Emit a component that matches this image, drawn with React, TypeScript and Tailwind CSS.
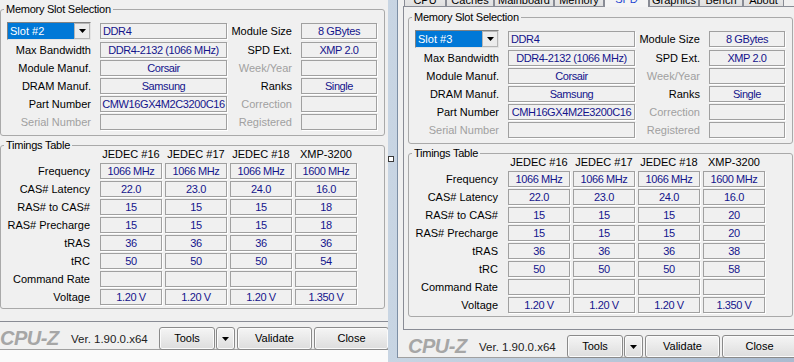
import React from 'react';

type SlotData = {
  slot: string;
  part: string;
  timings: string[][];
};

const TIMING_LABELS = [
  'Frequency',
  'CAS# Latency',
  'RAS# to CAS#',
  'RAS# Precharge',
  'tRAS',
  'tRC',
  'Command Rate',
  'Voltage',
];

const TIMING_HEADERS = ['JEDEC #16', 'JEDEC #17', 'JEDEC #18', 'XMP-3200'];

const SLOT2: SlotData = {
  slot: 'Slot #2',
  part: 'CMW16GX4M2C3200C16',
  timings: [
    ['1066 MHz', '1066 MHz', '1066 MHz', '1600 MHz'],
    ['22.0', '23.0', '24.0', '16.0'],
    ['15', '15', '15', '18'],
    ['15', '15', '15', '18'],
    ['36', '36', '36', '36'],
    ['50', '50', '50', '54'],
    ['', '', '', ''],
    ['1.20 V', '1.20 V', '1.20 V', '1.350 V'],
  ],
};

const SLOT3: SlotData = {
  slot: 'Slot #3',
  part: 'CMH16GX4M2E3200C16',
  timings: [
    ['1066 MHz', '1066 MHz', '1066 MHz', '1600 MHz'],
    ['22.0', '23.0', '24.0', '16.0'],
    ['15', '15', '15', '20'],
    ['15', '15', '15', '20'],
    ['36', '36', '36', '38'],
    ['50', '50', '50', '58'],
    ['', '', '', ''],
    ['1.20 V', '1.20 V', '1.20 V', '1.350 V'],
  ],
};

const TABS = [
  { name: 'CPU', w: 'w-[42px]' },
  { name: 'Caches', w: 'w-[48px]' },
  { name: 'Mainboard', w: 'w-[60px]' },
  { name: 'Memory', w: 'w-[50px]' },
  { name: 'SPD', w: 'w-[45px]', active: true },
  { name: 'Graphics', w: 'w-[50px]' },
  { name: 'Bench', w: 'w-[44px]' },
  { name: 'About', w: 'w-[41px]' },
];

function Field({ value, left }: { value: string; left?: boolean }) {
  return (
    <div
      className={`h-[16px] self-center border border-[#a0a0a0] shadow-[1px_1px_0_#fff] leading-[14px] tracking-[-0.4px] whitespace-nowrap overflow-hidden text-[#14148c] ${
        left ? 'text-left pl-[2px]' : 'text-center'
      }`}
    >
      {value}
    </div>
  );
}

function Label({ text, dim }: { text: string; dim?: boolean }) {
  return (
    <div className={`text-right pr-[9px] leading-[16px] self-center whitespace-nowrap ${dim ? 'text-[#a0a0a0]' : 'text-black'}`}>
      {text}
    </div>
  );
}

function SlotCombo({ slot }: { slot: string }) {
  return (
    <div className="ml-[6px] w-[84px] h-[18px] self-center flex border border-t-[#828282] border-l-[#828282] border-b-[#e3e3e3] border-r-[#e3e3e3] bg-white">
      <div className="flex-1 bg-[#0078d7] text-white leading-[16px] pl-[2px]">{slot}</div>
      <div className="w-[16px] flex items-center justify-center bg-[#ececec] border border-[#b5b5b5]">
        <svg width="7" height="4" viewBox="0 0 7 4">
          <path d="M0 0h7L3.5 4z" fill="#000" />
        </svg>
      </div>
    </div>
  );
}

function Button({ children, w }: { children: React.ReactNode; w: string }) {
  return (
    <div
      className={`${w} h-[23px] flex items-center justify-center border border-[#8a8a8a] rounded-[3px] bg-linear-to-b from-[#f5f5f5] to-[#dddddd] shadow-[inset_0_0_0_1px_#fbfbfb] text-black`}
    >
      {children}
    </div>
  );
}

function CpuzWindow({ data }: { data: SlotData }) {
  return (
    <div className="w-[400px] h-[372px] bg-[#f0f0f0] flex flex-col border-b border-[#a0a0a0]">
      {/* tab strip */}
      <div className="h-[20px] ml-[6px] flex items-end">
        {TABS.map(t =>
          t.active ? (
            <div
              key={t.name}
              className={`${t.w} h-[21px] -mb-px relative z-10 border border-b-0 border-[#898c95] bg-[#f4f4f4] text-[#1e46d2] text-center pt-[5px] leading-[14px]`}
            >
              {t.name}
            </div>
          ) : (
            <div
              key={t.name}
              className={`${t.w} h-[18px] border border-b-0 border-[#898c95] bg-linear-to-b from-[#f2f2f2] to-[#e0e0e0] text-black text-center pt-[4px] leading-[14px]`}
            >
              {t.name}
            </div>
          )
        )}
      </div>

      {/* tab panel */}
      <div className="ml-[5px] w-[394px] border border-[#898c95] pt-[3px] pl-[4px] pr-[3px] pb-[12px]">
        <fieldset className="border border-[#a9a9a9] rounded-[3px] pb-[5px]">
          <legend className="ml-[3px] px-[2px] h-[14px] leading-[14px] tracking-[-0.25px] text-black">Memory Slot Selection</legend>
          <div className="grid grid-cols-[99px_127px_74px_76px] grid-rows-[18px_16px_16px_16px_16px_16px] gap-y-[2px] pt-[6px]">
            <SlotCombo slot={data.slot} />
            <Field value="DDR4" left />
            <Label text="Module Size" />
            <Field value="8 GBytes" />

            <Label text="Max Bandwidth" />
            <Field value="DDR4-2132 (1066 MHz)" />
            <Label text="SPD Ext." />
            <Field value="XMP 2.0" />

            <Label text="Module Manuf." />
            <Field value="Corsair" />
            <Label text="Week/Year" dim />
            <Field value="" />

            <Label text="DRAM Manuf." />
            <Field value="Samsung" />
            <Label text="Ranks" />
            <Field value="Single" />

            <Label text="Part Number" />
            <Field value={data.part} />
            <Label text="Correction" dim />
            <Field value="" />

            <Label text="Serial Number" dim />
            <Field value="" />
            <Label text="Registered" dim />
            <Field value="" />
          </div>
        </fieldset>

        <fieldset className="mt-[2px] border border-[#a9a9a9] rounded-[3px] pb-[3px]">
          <legend className="ml-[3px] px-[2px] h-[14px] leading-[14px] tracking-[-0.25px] text-black">Timings Table</legend>
          <div className="-mt-[4px] grid grid-cols-[96px_62px_62px_62px_62px] grid-rows-[13px_repeat(8,16px)] gap-x-[3px] gap-y-[2px]">
            <div />
            {TIMING_HEADERS.map(h => (
              <div key={h} className="text-center leading-[13px] text-black whitespace-nowrap">
                {h}
              </div>
            ))}
            {TIMING_LABELS.map((label, i) => (
              <React.Fragment key={label}>
                <div className="text-right pr-[7px] leading-[16px] text-black whitespace-nowrap">{label}</div>
                {data.timings[i].map((v, j) => (
                  <Field key={j} value={v} />
                ))}
              </React.Fragment>
            ))}
          </div>
        </fieldset>
      </div>

      {/* bottom bar */}
      <div className="flex items-center pt-[5px]">
        <div className="ml-[10px] w-[58px] whitespace-nowrap italic font-bold text-[20px] leading-[23px] tracking-[-0.5px] text-[#a6a6a6]">
          CPU-Z
        </div>
        <div className="ml-[13px] w-[88px] pt-[2px] text-[11.5px] text-[#222] whitespace-nowrap">Ver. 1.90.0.x64</div>
        <Button w="w-[56px]">Tools</Button>
        <div className="ml-[1px]">
          <Button w="w-[19px]">
            <svg width="7" height="4" viewBox="0 0 7 4">
              <path d="M0 0h7L3.5 4z" fill="#000" />
            </svg>
          </Button>
        </div>
        <div className="ml-[2px]">
          <Button w="w-[75px]">Validate</Button>
        </div>
        <div className="ml-[2px]">
          <Button w="w-[75px]">Close</Button>
        </div>
      </div>
    </div>
  );
}

export default function App() {
  return (
    <div className="relative w-[794px] h-[362px] overflow-hidden bg-[#fafafa] text-[11px] font-['Liberation_Sans',Arial,sans-serif]">
      {/* left window, partly hidden */}
      <div className="absolute left-[-10px] top-[-22px]">
        <CpuzWindow data={SLOT2} />
      </div>

      {/* right window with its aero frame */}
      <div className="absolute left-[388px] top-[-30px] w-[420px] h-[420px] pl-[9px] pt-[16px] bg-linear-to-r from-[#c8d5e3] to-[#a9bacf]">
        <div className="border-l border-[#7d8fa5]">
          <CpuzWindow data={SLOT3} />
        </div>
      </div>

      <div className="absolute left-[388px] top-[156px] w-[6px] h-[6px] border border-[#3a3a3a] bg-white" />
    </div>
  );
}
